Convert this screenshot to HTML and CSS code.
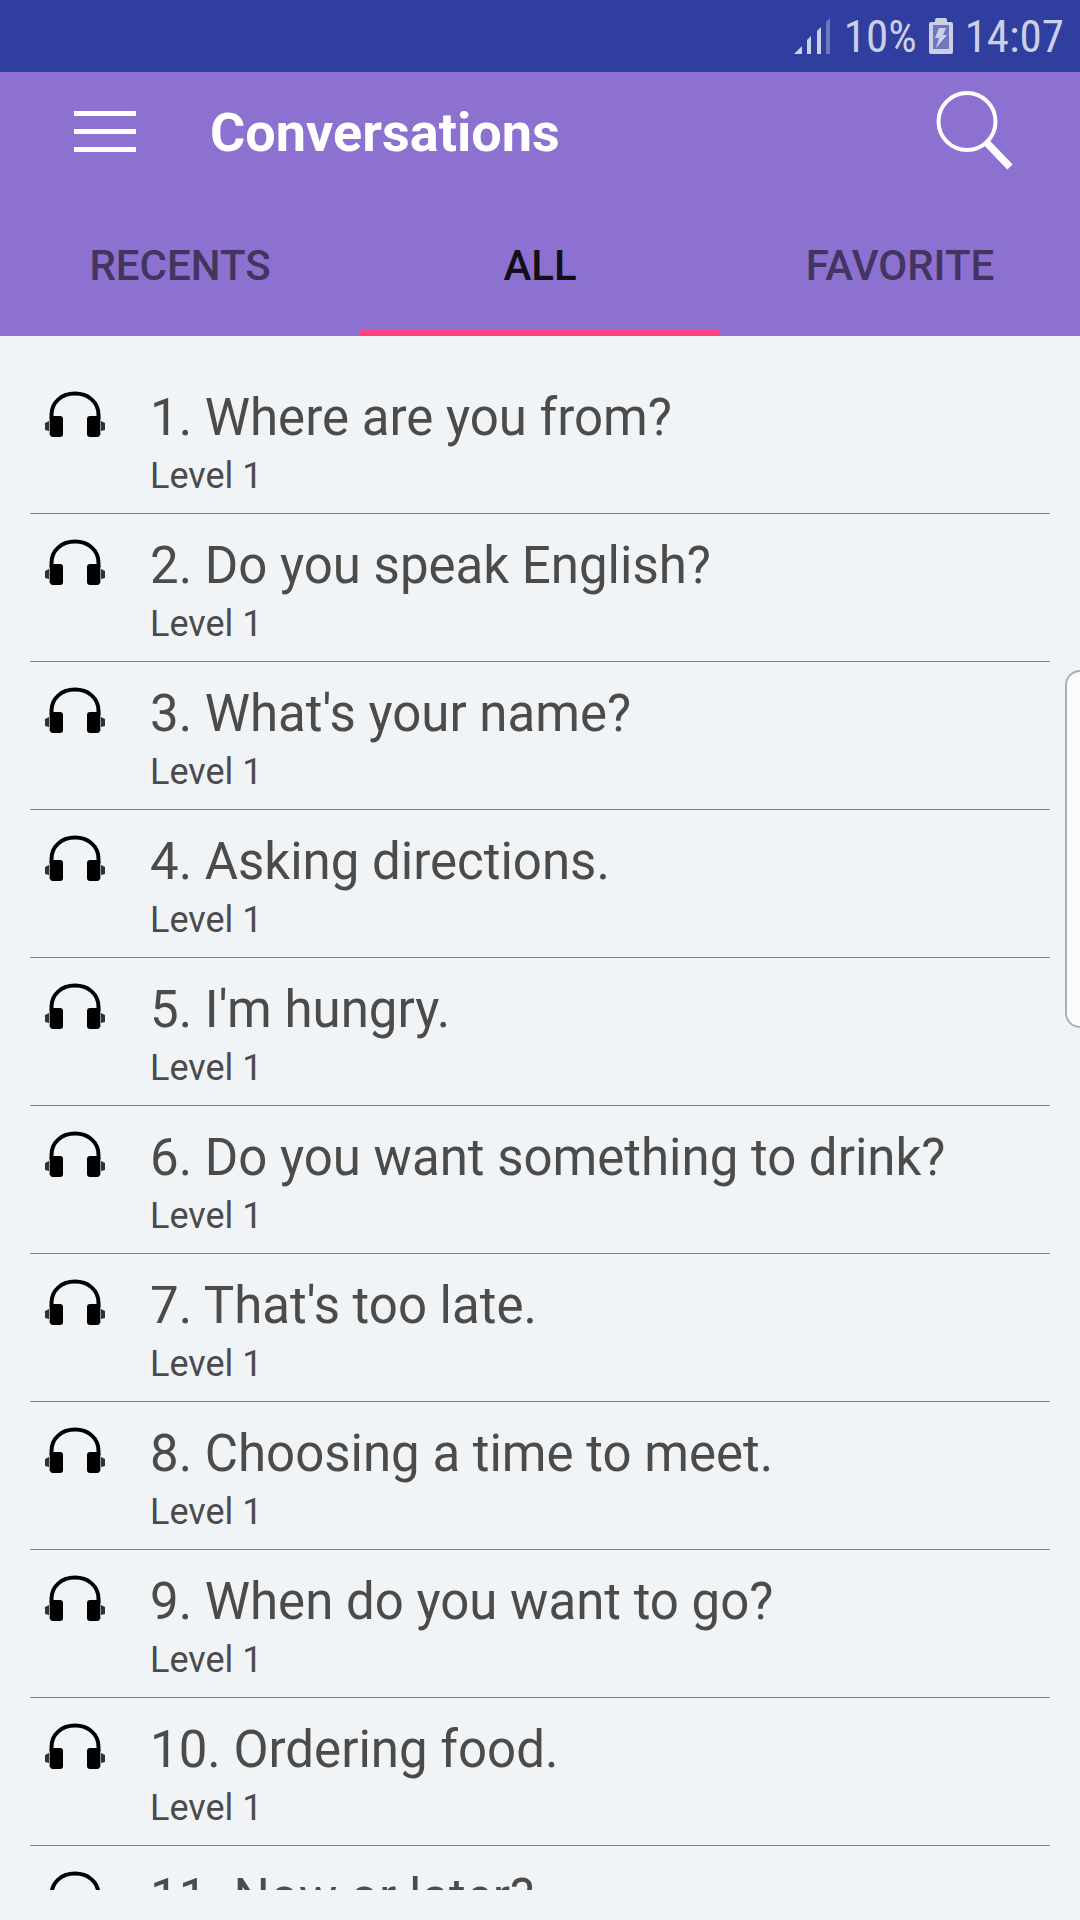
FILE: index.html
```html
<!DOCTYPE html>
<html lang="en">
<head>
<meta charset="utf-8">
<meta name="viewport" content="width=device-width, initial-scale=1">
<title>Conversations</title>
<link rel="stylesheet" href="styles.css">
</head>
<body>
<svg class="sprite" aria-hidden="true">
  <symbol id="headphones" viewBox="0 0 60 46">
    <path d="M6.500 28V24C6.500 11 17 2.500 30 2.500S53.500 11 53.500 24V28" fill="none" stroke="#000" stroke-width="4"/>
    <rect x="5" y="25" width="13" height="21" rx="3"/>
    <rect x="42" y="25" width="13" height="21" rx="3"/>
    <path d="M4 27H6V44H4ZM54 27H56V44H54Z" opacity=".35"/>
    <path d="M0 32 4 30V40L0 39ZM60 32 56 30V40L60 39Z" opacity=".8"/>
  </symbol>
</svg>
<div class="status">
  <svg class="signal" width="36" height="36" viewBox="0 0 36 36" aria-label="Signal">
    <path d="M0 36 8 28V36ZM13 22 17 18V36H13ZM23 13 27 9V36H23Z"/>
    <path class="faint" d="M32 4 36 0V36H32Z"/>
  </svg>
  <span class="percent">10%</span>
  <svg class="battery" width="24" height="36" viewBox="0 0 24 36" aria-label="Charging">
    <path d="M8 0H16Q18 0 18 2V4H22Q24 4 24 6V34Q24 36 22 36H2Q0 36 0 34V6Q0 4 2 4H6V2Q6 0 8 0Z"/>
    <path class="cell" d="M4 7H20V31H4Z"/>
    <path d="M10 10H17L14 17H18L7 30L10 20H6Z"/>
  </svg>
  <span>14:07</span>
</div>
<header class="header">
  <div class="appbar">
    <button class="icon-button" aria-label="Menu">
      <svg width="62" height="42" viewBox="0 0 62 42"><path d="M0 0H62V5H0ZM0 18H62V23H0ZM0 36H62V41H0Z"/></svg>
    </button>
    <h1 class="title">Conversations</h1>
    <button class="icon-button" aria-label="Search">
      <svg width="78" height="82" viewBox="0 0 78 82" fill="none" stroke="#fff"><circle cx="31" cy="30.500" r="28.500" stroke-width="4"/><path d="M50 51 74 76" stroke-width="7.500"/></svg>
    </button>
  </div>
  <nav class="tabs">
    <button class="tab">RECENTS</button>
    <button class="tab active">ALL</button>
    <button class="tab">FAVORITE</button>
  </nav>
</header>
<main class="content">
  <ul class="list">
    <li><a class="row" href="#1"><svg class="phones"><use href="#headphones"/></svg><span class="name">1. Where are you from?</span><span class="level">Level 1</span></a></li>
    <li><a class="row" href="#2"><svg class="phones"><use href="#headphones"/></svg><span class="name">2. Do you speak English?</span><span class="level">Level 1</span></a></li>
    <li><a class="row" href="#3"><svg class="phones"><use href="#headphones"/></svg><span class="name">3. What's your name?</span><span class="level">Level 1</span></a></li>
    <li><a class="row" href="#4"><svg class="phones"><use href="#headphones"/></svg><span class="name">4. Asking directions.</span><span class="level">Level 1</span></a></li>
    <li><a class="row" href="#5"><svg class="phones"><use href="#headphones"/></svg><span class="name">5. I'm hungry.</span><span class="level">Level 1</span></a></li>
    <li><a class="row" href="#6"><svg class="phones"><use href="#headphones"/></svg><span class="name">6. Do you want something to drink?</span><span class="level">Level 1</span></a></li>
    <li><a class="row" href="#7"><svg class="phones"><use href="#headphones"/></svg><span class="name">7. That's too late.</span><span class="level">Level 1</span></a></li>
    <li><a class="row" href="#8"><svg class="phones"><use href="#headphones"/></svg><span class="name">8. Choosing a time to meet.</span><span class="level">Level 1</span></a></li>
    <li><a class="row" href="#9"><svg class="phones"><use href="#headphones"/></svg><span class="name">9. When do you want to go?</span><span class="level">Level 1</span></a></li>
    <li><a class="row" href="#10"><svg class="phones"><use href="#headphones"/></svg><span class="name">10. Ordering food.</span><span class="level">Level 1</span></a></li>
    <li><a class="row" href="#11"><svg class="phones"><use href="#headphones"/></svg><span class="name">11. Now or later?</span></a></li>
  </ul>
</main>
<div class="edge-handle"></div>
</body>
</html>
```
FILE: styles.css
```css
* { box-sizing: border-box; }

body {
  margin: 0;
  height: 100vh;
  display: flex;
  flex-direction: column;
  background: #f0f4f7;
  font-family: Roboto, sans-serif;
  color: #4d4b4a;
}

button {
  border: 0;
  padding: 0;
  background: none;
  font: inherit;
}

svg { display: block; }

.sprite { position: absolute; width: 0; height: 0; }

.status {
  flex: none;
  display: flex;
  align-items: center;
  justify-content: flex-end;
  height: 72px;
  padding: 0 16px;
  background: #303f9f;
  color: #cbcfe7;
  fill: #cbcfe7;
  font-family: "Roboto Condensed", Roboto, sans-serif;
  font-size: 45px;
  line-height: 56px;
}

.percent { margin: 0 12px 0 14px; padding-top: 2px; }
.battery { margin-right: 12px; }
.battery + span { padding-top: 2px; }
.faint, .cell { fill: #6e79bc; }

.header { flex: none; background: #8c71d1; }

.appbar {
  display: flex;
  align-items: center;
  height: 120px;
  padding: 0 66px 0 74px;
}

.icon-button { fill: #fff; }

.title {
  flex: 1;
  margin: 0 0 0 74px;
  padding-top: 2px;
  color: #fff;
  font-size: 54px;
  font-weight: 700;
  line-height: 64px;
}

.tabs { display: flex; height: 144px; }

.tab {
  flex: 1;
  border-top: 8px solid transparent;
  border-bottom: 6px solid transparent;
  color: #42355f;
  font-size: 42px;
  font-weight: 500;
}

.tab.active { color: #120f18; border-bottom-color: #ff4081; }

.content {
  flex: 1;
  min-height: 0;
  overflow: hidden;
  margin: 30px;
}

.list { margin: 0; padding: 0; list-style: none; }

.row {
  display: grid;
  grid-template-columns: 60px 1fr;
  column-gap: 45px;
  height: 148px;
  padding: 20px 15px 0;
  border-bottom: 1px solid #419bb0;
  color: inherit;
  text-decoration: none;
  align-content: start;
}

.phones { width: 60px; height: 46px; margin-top: 5px; }
.name { font-size: 51px; line-height: 64px; }
.level { grid-column: 2; font-size: 36px; line-height: 52px; }

/* Edge panel grip, half off the right side of the screen */
.edge-handle {
  position: absolute;
  top: 670px;
  right: 0;
  width: 15px;
  height: 358px;
  border: 2px solid #adb0b2;
  border-right: 0;
  border-radius: 15px 0 0 15px;
  background: #fafcfe;
}
```
